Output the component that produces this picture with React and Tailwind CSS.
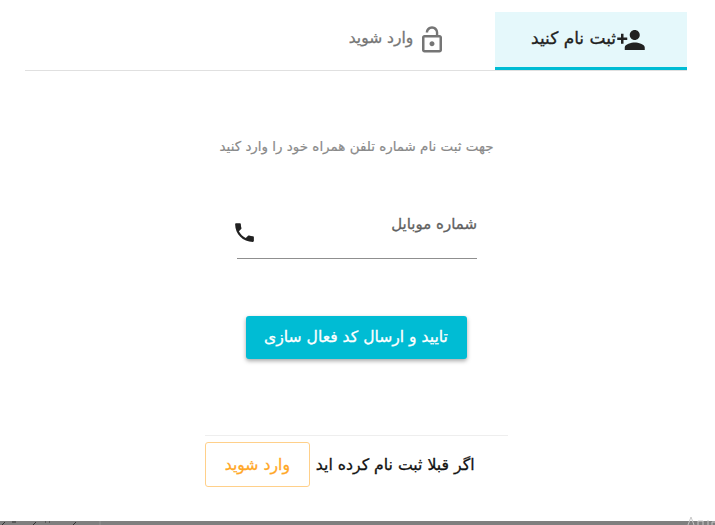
import React from 'react';

const font = "font-['DejaVu_Sans',sans-serif]";

const App = () => {
    return (
        <div dir="rtl" className={`h-[525px] w-[715px] bg-white flex flex-col overflow-hidden ${font}`}>
            <div className="flex-1 pt-3 pr-7 pl-[25px]">
                {/* tabs */}
                <div className="flex h-[59px] border-b border-[#e0e0e0]">
                    <div className="w-[192px] h-[58px] pr-[5px] bg-[#e5f8fb] border-b-[3px] border-[#00bcd4] flex items-center justify-center gap-0 text-[17px] text-[#212121] [-webkit-text-stroke:0.3px_#212121]">
                        <svg width="30" height="30" viewBox="0 0 24 24" fill="#212121">
                            <path d="M15 12c2.21 0 4-1.79 4-4s-1.79-4-4-4-4 1.79-4 4 1.79 4 4 4zm-9-2V7H4v3H1v2h3v3h2v-3h3v-2H6zm9 4c-2.67 0-8 1.34-8 4v2h16v-2c0-2.66-5.33-4-8-4z" />
                        </svg>
                        <span className="pb-0.5">ثبت نام کنید</span>
                    </div>
                    <div className="w-[192px] h-[58px] pb-[3px] pr-0.5 flex items-center justify-center gap-1 text-[15.5px] text-[#757575] [-webkit-text-stroke:0.3px_#757575]">
                        <svg width="30" height="30" viewBox="0 0 24 24" fill="#757575">
                            <path d="M12 17c1.1 0 2-.9 2-2s-.9-2-2-2-2 .9-2 2 .9 2 2 2zm6-9h-1V6c0-2.76-2.24-5-5-5S7 3.24 7 6h1.9c0-1.71 1.39-3.1 3.1-3.1 1.71 0 3.1 1.39 3.1 3.1v2H6c-1.1 0-2 .9-2 2v10c0 1.1.9 2 2 2h12c1.1 0 2-.9 2-2V10c0-1.1-.9-2-2-2zm0 12H6V10h12v10z" />
                        </svg>
                        <span className="pb-0.5">وارد شوید</span>
                    </div>
                </div>

                <div className="flex flex-col items-center">
                    <p className="mt-[67px] mr-[-1px] text-[13.45px] leading-[18px] text-[#8a8a8a] [-webkit-text-stroke:0.2px_#8a8a8a]">جهت ثبت نام شماره تلفن همراه خود را وارد کنید</p>

                    {/* phone field */}
                    <div className="mt-[49px] ml-[2px] w-[240px] h-[54px] border-b border-[#8f8f8f] flex items-start justify-between">
                        <span className="mt-[9px] text-[15px] leading-[20px] text-[#616161] [-webkit-text-stroke:0.3px_#616161]">شماره موبایل</span>
                        <svg className="mt-[15px] ml-[-5px]" width="25" height="25" viewBox="0 0 24 24" fill="#212121">
                            <path d="M6.62 10.79c1.44 2.83 3.76 5.14 6.59 6.59l2.2-2.2c.27-.27.67-.36 1.02-.24 1.12.37 2.33.57 3.57.57.55 0 1 .45 1 1V20c0 .55-.45 1-1 1-9.39 0-17-7.61-17-17 0-.55.45-1 1-1h3.5c.55 0 1 .45 1 1 0 1.25.2 2.45.57 3.57.11.35.03.74-.25 1.02l-2.2 2.2z" />
                        </svg>
                    </div>

                    <button className="mt-[57px] w-[221px] h-[43px] rounded-[3px] bg-[#00bcd4] text-white text-[15.6px] [-webkit-text-stroke:0.3px_#ffffff] shadow-[0_2px_4px_rgba(0,0,0,0.35)]">
                        تایید و ارسال کد فعال سازی
                    </button>

                    {/* already registered */}
                    <div className="mt-[76px] w-[303px] border-t border-[#eeeeee] pt-1.5 pr-[33px] flex items-center gap-1.5">
                        <span className="whitespace-nowrap text-[15.7px] text-[#111111] [-webkit-text-stroke:0.3px_#111111]">اگر قبلا ثبت نام کرده اید</span>
                        <button className="shrink-0 w-[105px] h-[45px] rounded-[3px] border border-[#ffd08a] text-[#ffa726] text-[15.7px] [-webkit-text-stroke:0.3px_#ffa726]">وارد شوید</button>
                    </div>
                </div>
            </div>
            {/* cut off status bar */}
            <div className="relative h-1 bg-[#7f7f7f]">
                <svg className="absolute left-0 bottom-0 overflow-visible" width="715" height="4" viewBox="0 0 715 4" fill="none">
                    <path d="M2 4l3-3M12 1h4M33 4l3-3M45 1h1M49 1h1M73 4l3-3" stroke="#333333" strokeWidth="1" />
                    <path d="M100 0v4" stroke="#969696" strokeWidth="1" />
                    <path d="M688 4l3-8 3 8M698 4v-4h5v4M708 4v-5M712 4v-3h3" stroke="#c9c9c9" strokeWidth="1" />
                </svg>
            </div>
        </div>
    );
};

export default App;
